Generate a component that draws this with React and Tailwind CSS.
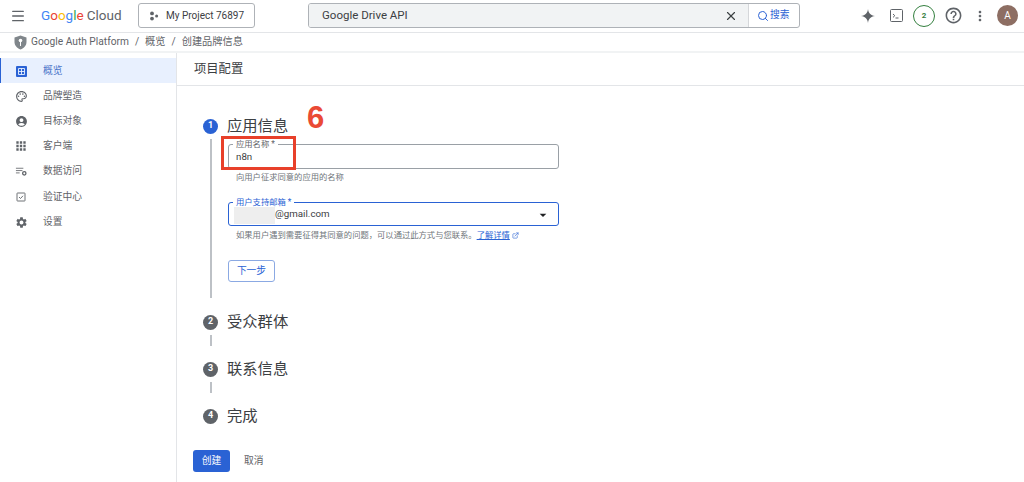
import { ExternalLink, Menu, Search, X } from "lucide-react"
import { MdOutlineHelpOutline, MdAccountCircle, MdApps, MdSettings, MdOutlinePalette, MdArrowDropDown, MdMoreVert } from "react-icons/md"

const navItems = [
  { label: "品牌塑造", icon: <MdOutlinePalette size={13} /> },
  { label: "目标对象", icon: <MdAccountCircle size={13} /> },
  { label: "客户端", icon: <MdApps size={14} /> },
  { label: "数据访问", icon: <DataIcon /> },
  { label: "验证中心", icon: <VerifyIcon /> },
  { label: "设置", icon: <MdSettings size={13} /> },
]

function DataIcon() {
  return (
    <svg width="13" height="13" viewBox="0 0 14 14" fill="none" stroke="currentColor">
      <path d="M1 3.5h8M1 6h7M1 8.500h4" strokeWidth="0.9" />
      <circle cx="10" cy="9" r="1.800" strokeWidth="1.400" />
    </svg>
  )
}

function VerifyIcon() {
  return (
    <svg width="12" height="12" viewBox="0 0 12 12" fill="none" stroke="currentColor" strokeWidth="0.9">
      <rect x="2" y="2" width="8" height="8" rx="0.5" />
      <path d="M4 6l1.500 1.500L8 4.800" />
    </svg>
  )
}

function OverviewIcon() {
  return (
    <svg width="11" height="11" viewBox="0 0 11 11" fill="none">
      <rect width="11" height="11" rx="1" fill="#2a62d4" />
      <path d="M2.500 2.500h6v6h-6zM5.500 2.500v6M2.500 5.500h6" stroke="#e8f0fe" strokeWidth="0.9" />
    </svg>
  )
}

function TerminalIcon() {
  return (
    <svg width="13" height="13" viewBox="0 0 13 13" fill="none" stroke="#5f6368">
      <rect x="0.500" y="0.500" width="12" height="12" rx="1" strokeWidth="1" />
      <path d="M3 5l1.800 1.700L3 8.400" strokeWidth="1" />
      <path d="M5.500 9h3" strokeWidth="1" />
    </svg>
  )
}

function GoogleLogo() {
  const letters = [
    ["G", "text-[#4285f4]"],
    ["o", "text-[#ea4335]"],
    ["o", "text-[#fbbc04]"],
    ["g", "text-[#4285f4]"],
    ["l", "text-[#34a853]"],
    ["e", "text-[#ea4335]"],
  ]
  return (
    <div className="flex items-baseline w-[83px] text-[13.500px] font-['Roboto',sans-serif] leading-none">
      {letters.map(([c, color], i) => (
        <span key={i} className={color}>{c}</span>
      ))}
      <span className="ml-[3px] text-[#5f6368]">Cloud</span>
    </div>
  )
}

function StepBadge({ n, active }) {
  return (
    <div className={`w-[15px] h-[15px] rounded-full flex items-center justify-center text-white text-[9px] font-bold shrink-0 ${active ? "bg-[#2a62d4]" : "bg-[#5f6368]"}`}>
      {n}
    </div>
  )
}

function StepTitle({ n, active, label, className = "" }) {
  return (
    <div className={`flex items-center h-[16px] gap-[9px] text-[15.300px] text-[#3c4043] ${className}`}>
      <StepBadge n={n} active={active} />
      <span>{label}</span>
    </div>
  )
}

function Connector({ className }) {
  return <div className={`ml-[7px] w-[1.500px] bg-[#bdc1c6] shrink-0 ${className}`} />
}

export default function App() {
  return (
    <div className="relative w-[1024px] h-[482px] overflow-hidden bg-white text-[#3c4043] font-['Roboto','Noto_Sans_CJK_SC',sans-serif]">
      {/* top bar */}
      <header className="flex items-center h-[33px] pl-[10px] pb-[1px] border-b border-[#e3e5e8]">
        <Menu size={16} strokeWidth={2} className="text-[#5f6368]" />
        <div className="ml-[15px]"><GoogleLogo /></div>
        <button className="ml-[14px] flex items-center w-[117px] h-[25px] pl-[10px] border border-[#aeb2b7] rounded-[3px] text-[10px] text-[#3c4043]">
          <svg width="10" height="10" viewBox="0 0 10 10" fill="#5f6368" className="mr-[7px]">
            <circle cx="3" cy="2.400" r="1.900" /><circle cx="7.600" cy="5" r="1.500" /><circle cx="3" cy="7.600" r="1.900" />
          </svg>
          My Project 76897
        </button>
        <div className="ml-[53px] flex items-center w-[492px] h-[25px] border border-[#aeb2b7] rounded-[3px] overflow-hidden">
          <div className="flex items-center flex-1 h-full bg-[#f1f3f4] pl-[13px] pr-[10px] text-[11.500px] border-r border-[#d5d7da]">
            <span className="flex-1">Google Drive API</span>
            <X size={14} strokeWidth={2} className="text-[#3c4043]" />
          </div>
          <div className="flex items-center w-[50px] pl-[8px] text-[#2a62d4] text-[9.750px]">
            <Search size={12} strokeWidth={2} className="mr-px" />
            <span>搜索</span>
          </div>
        </div>
        <svg width="16" height="16" viewBox="0 0 16 16" fill="#5f6368" className="ml-[60px]">
          <path d="M8 1c.5 4 2.500 6.500 7 7-4.500.5-6.500 3-7 7-.5-4-2.500-6.500-7-7 4.500-.5 6.500-3 7-7z" />
        </svg>
        <div className="ml-[14px]"><TerminalIcon /></div>
        <div className="ml-[10px] w-[22px] h-[22px] rounded-full border-[1.500px] border-[#34803f] flex items-center justify-center text-[8px] font-bold text-[#34803f]">2</div>
        <MdOutlineHelpOutline size={19} className="ml-[9px] text-[#5f6368]" />
        <MdMoreVert size={16} className="ml-[9px] text-[#5f6368]" />
        <div className="ml-[9px] w-[21px] h-[21px] rounded-full bg-[#8d6e63] flex items-center justify-center text-[10px] text-white">A</div>
      </header>

      {/* breadcrumb */}
      <div className="flex items-center h-[18px] pl-[14px] text-[10.200px] text-[#5f6368] border-b-2 border-[#f1f3f4] box-content">
        <svg width="13" height="15" viewBox="0 0 13 15" className="mr-[4px]">
          <path d="M6.500 0.500L12.500 2.500V7c0 3.500-2.500 6-6 7.500C3 13 0.500 10.500 0.500 7V2.500z" fill="#80868b" />
          <circle cx="6.500" cy="5.500" r="1.800" fill="#fff" />
          <path d="M6 7h1v4H6z" fill="#fff" />
        </svg>
        <span>Google Auth Platform</span>
        <span className="mx-[6px]">/</span>
        <span>概览</span>
        <span className="mx-[6px]">/</span>
        <span>创建品牌信息</span>
      </div>

      <div className="flex h-[429px]">
        {/* sidebar */}
        <aside className="w-[177px] shrink-0 border-r border-[#e3e5e8] pt-[5px]">
          <div className="flex items-center h-[25px] pl-[14px] pt-[1px] bg-[#e8f0fe] border-l border-[#2a62d4] text-[9.750px]">
            <span className="flex justify-center w-[13px] mr-[15px]"><OverviewIcon /></span>
            <span className="text-[#4a74c9]">概览</span>
          </div>
          {navItems.map((item) => (
            <div key={item.label} className="flex items-center h-[25.200px] pl-[14px] pt-[1px] text-[9.750px] text-[#5f6368]">
              <span className="flex justify-center w-[14px] mr-[15px] text-[#5f6368]">{item.icon}</span>
              {item.label}
            </div>
          ))}
        </aside>

        {/* main */}
        <main className="flex-1 min-w-0">
          <div className="flex items-center h-[33px] pl-[17px] pt-[1px] text-[12.300px] text-[#3c4043] border-b border-[#e3e5e8]">项目配置</div>
          <div className="pl-[26px] pt-[32px]">
            <StepTitle n="1" active label="应用信息" />
            <div className="flex">
              <Connector className="mt-[5px] h-[159px]" />
              <div className="ml-[16.500px] w-[331px]">
                {/* app name field */}
                <div className="relative mt-[10px] h-[25px] border border-[#9aa0a6] rounded-[3px] flex items-center pl-[7px] pt-[2px] text-[9.750px]">
                  <span className="absolute -top-[5px] left-[4px] px-[3px] bg-white text-[8.300px] leading-[9px] text-[#5f6368]">应用名称 *</span>
                  n8n
                </div>
                <div className="mt-[3px] pl-[8px] text-[8.300px] leading-[10px] text-[#70757a]">向用户征求同意的应用的名称</div>

                {/* support email */}
                <div className="relative mt-[20px] h-[24px] border border-[#2a62d4] rounded-[3px] flex items-center pt-[1px] text-[9.750px]">
                  <span className="absolute -top-[5px] left-[4px] px-[3px] bg-white text-[8.300px] leading-[9px] text-[#2a62d4]">用户支持邮箱 *</span>
                  <span className="ml-[5px] w-[41px] h-[19px] bg-[#eeeeee]" />
                  <span>@gmail.com</span>
                  <MdArrowDropDown size={16} className="ml-auto mr-[7px] text-[#202124]" />
                </div>
                <div className="flex items-center mt-[4px] pl-[8px] text-[8.300px] leading-[10px] whitespace-nowrap text-[#70757a]">
                  如果用户遇到需要征得其同意的问题，可以通过此方式与您联系。
                  <span className="text-[#2a62d4] underline">了解详情</span>
                  <ExternalLink size={7} className="ml-[2px] text-[#2a62d4]" />
                </div>

                <button className="mt-[20px] w-[47px] h-[22px] border border-[#8ba9e3] rounded-[3px] text-[9.750px] text-[#2a62d4]">下一步</button>
              </div>
            </div>

            <StepTitle n="2" label="受众群体" className="mt-[16px]" />
            <Connector className="h-[11px] mt-[5px]" />
            <StepTitle n="3" label="联系信息" className="mt-[15px]" />
            <Connector className="h-[11px] mt-[5px]" />
            <StepTitle n="4" label="完成" className="mt-[15px]" />
          </div>
          <div className="flex items-center mt-[26px] ml-[16px]">
            <button className="w-[37px] h-[22px] bg-[#2a62d4] rounded-[3px] text-[9.750px] text-white">创建</button>
            <button className="ml-[14px] text-[9.750px] text-[#5f6368]">取消</button>
          </div>
        </main>
      </div>

      {/* annotation over the screenshot */}
      <div className="absolute left-[221px] top-[136px] w-[75px] h-[34px] border-[3px] border-[#e8402a]" />
      <div className="absolute left-[307px] top-[99px] text-[31px] leading-[38px] font-bold text-[#ea4a35] font-['Liberation_Sans',sans-serif]">6</div>
    </div>
  )
}
